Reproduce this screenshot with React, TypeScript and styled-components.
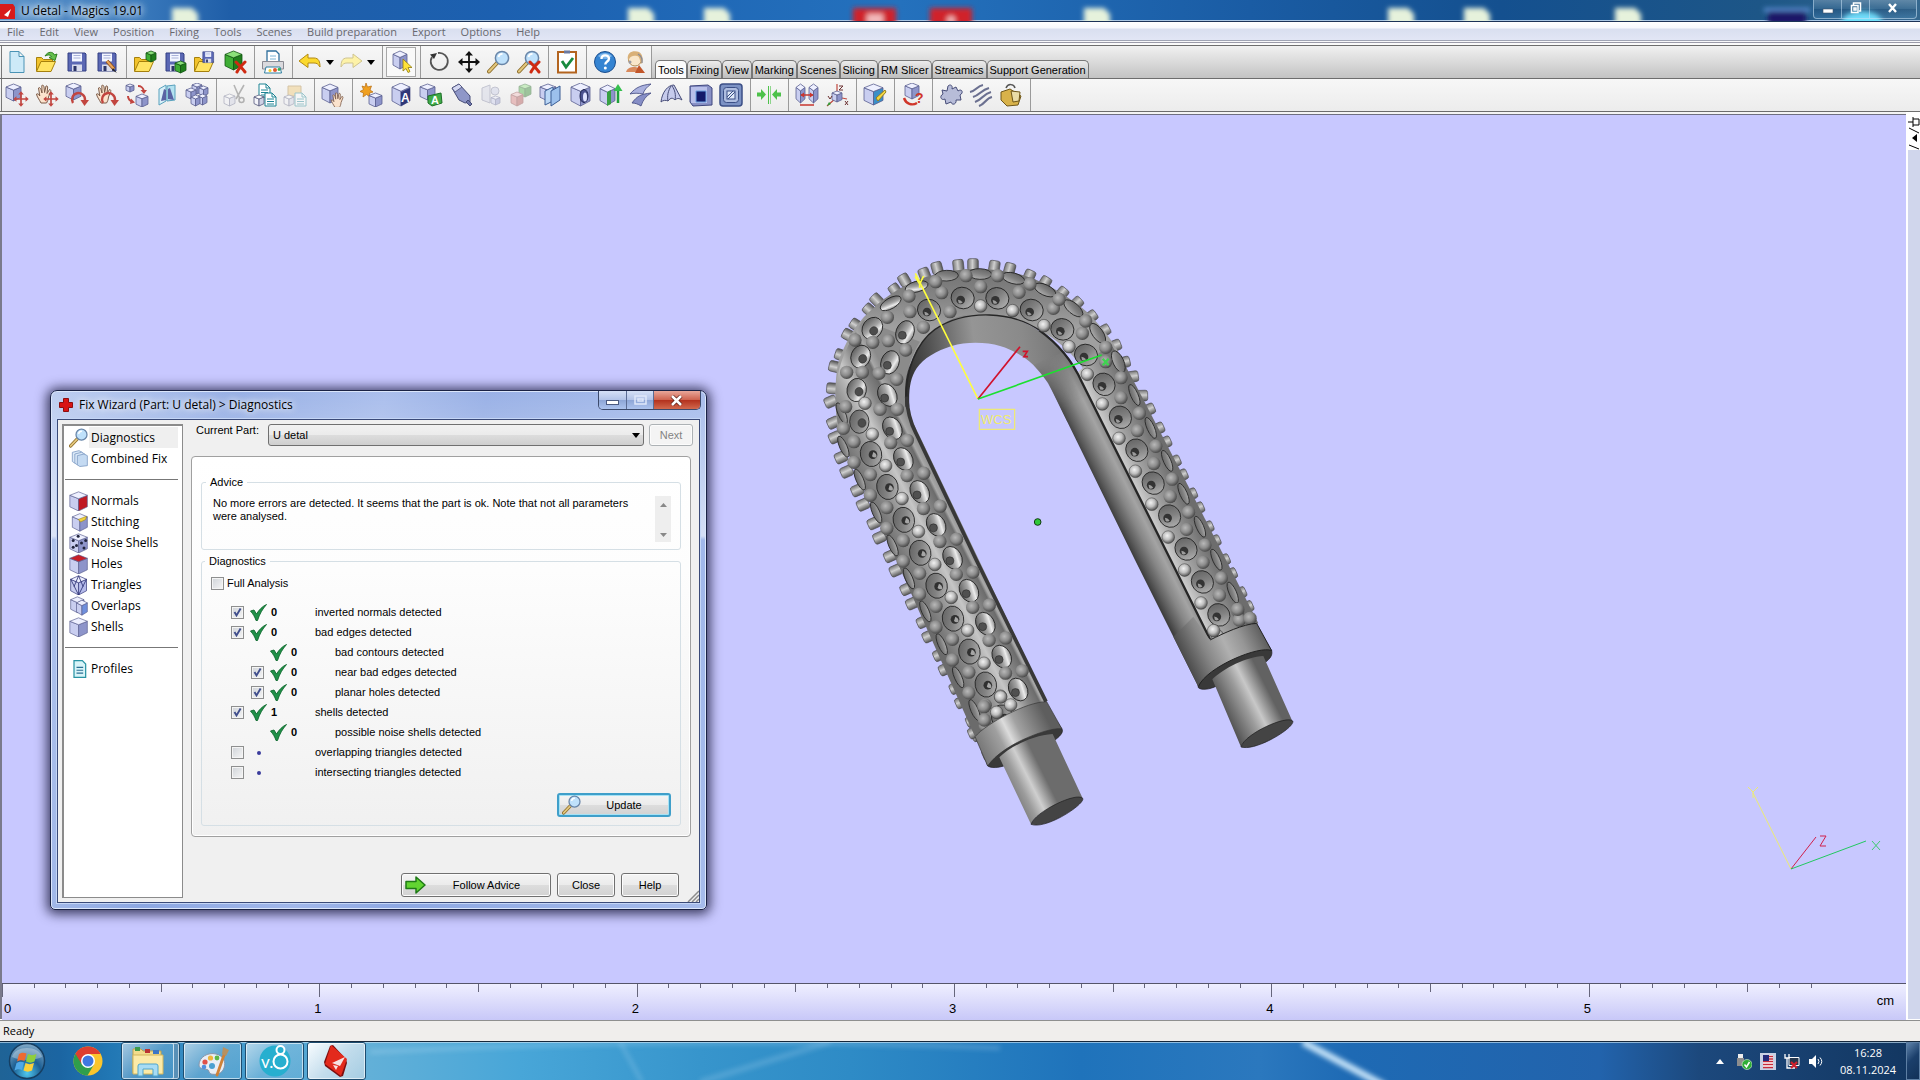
import React from 'react';
import styled, { createGlobalStyle } from 'styled-components';

const ui = '"Liberation Sans", Arial, sans-serif';
const segoe = '"Open Sans", "Noto Sans", sans-serif';

const Global = createGlobalStyle`
  *, *::before, *::after { box-sizing: border-box; }
  html, body, #root { height: 100%; margin: 0; }
  body { font: 11px/13px ${ui}; color: #000; overflow: hidden; }
  button, select, input { font: inherit; color: inherit; margin: 0; }
  button { cursor: default; }
`;

/* ---------- application shell ---------- */

const Shell = styled.div`
  display: flex;
  flex-direction: column;
  min-height: 100vh;
  background: #f0f0f0;
`;

const TitleBar = styled.header`
  position: relative;
  display: flex;
  justify-content: space-between;
  height: 22px;
  overflow: hidden;
  border-bottom: 1px solid #1c3358;
  box-shadow: inset 0 -1px 0 #a9c6e4;
  background: linear-gradient(90deg, #5c93c9 0, #3f7fc0 120px, #1f5ea8 230px, #1c60b0 500px, #2471bd 900px, #1a5ca4 1250px, #14508f 1500px, #1d5687 1760px, #35688f 100%);
`;

const Glimpses = styled.svg`
  position: absolute;
  inset: 0;
  width: 100%;
  height: 100%;
`;

const TitleLabel = styled.h1`
  position: relative;
  display: flex;
  align-items: center;
  gap: 6px;
  margin: 0;
  height: 21px;
  font: 400 12px/20px ${segoe};
  text-shadow: 0 0 6px #fff, 0 0 8px #fff, 0 0 10px #d8e8ff;
`;

const WindowButtons = styled.div`
  position: relative;
  display: flex;
  height: 19px;
  margin-right: 3px;
  border: 1px solid rgba(200, 225, 245, 0.6);
  border-top: 0;
  border-radius: 0 0 4px 4px;
  overflow: hidden;
`;

const WindowButton = styled.button<{ $w: number }>`
  display: grid;
  place-items: center;
  width: ${p => p.$w}px;
  padding: 0 0 2px;
  border: 0;
  border-right: 1px solid rgba(200, 225, 245, 0.55);
  background: linear-gradient(rgba(255, 255, 255, 0.22), rgba(255, 255, 255, 0.05) 50%, rgba(0, 20, 60, 0.1) 50%, rgba(120, 200, 255, 0.15));
  &:last-child { border-right: 0; }
`;

const MenuBar = styled.nav`
  display: flex;
  gap: 15px;
  height: 23px;
  padding: 1px 7px 0;
  background: linear-gradient(#fff 0, #f6f8fd 6px, #d9dff0 7px, #e2e6f5 18px, #a0a4b4 18px, #a0a4b4 19px, #f8f8fa 19px, #f8f8fa 20px, #9a9aa8 20px, #9a9aa8 21px, #fafafa 21px);
`;

const MenuItem = styled.button`
  height: 18px;
  padding: 0;
  border: 0;
  background: none;
  color: #68686e;
  font: 11px/18px ${segoe};
`;

const ToolRow = styled.div`
  display: flex;
  height: 33px;
  padding-left: 1px;
  border-top: 1px solid #6d6d6d;
  background: linear-gradient(#f7f7f7, #ececec);
`;

const ToolGroup = styled.div<{ $first?: boolean; $tight?: boolean }>`
  display: flex;
  align-items: center;
  padding: 0 ${p => (p.$tight ? 1 : 4)}px 0 ${p => (p.$first ? 0 : 3)}px;
  border-left: ${p => (p.$first ? '1px solid #777' : '0')};
  border-right: 1px solid #9a9a9a;
`;

const ToolButton = styled.button<{ $pressed?: boolean; $w?: number }>`
  display: grid;
  place-items: center;
  width: ${p => p.$w ?? 30}px;
  height: 30px;
  padding: 0;
  border: 1px solid ${p => (p.$pressed ? '#a8a8a8' : 'transparent')};
  background: ${p => (p.$pressed ? '#f9f9f9' : 'none')};
  &:disabled { opacity: 0.4; }
`;

const TabStrip = styled.div`
  display: flex;
  flex: 1;
  align-items: flex-end;
  padding-left: 3px;
  background: linear-gradient(#f1f1f1, #c3c3c3);
`;

const ToolTab = styled.button<{ $active?: boolean }>`
  height: 18px;
  padding: 0 2px;
  border: 1px solid #777;
  border-bottom: 0;
  border-radius: 5px 5px 0 0;
  background: ${p => (p.$active ? '#fbfbfb' : 'linear-gradient(#ececec, #bdbdbd)')};
  font: 11px/18px ${ui};
  white-space: nowrap;
`;

/* ---------- 3D viewport ---------- */

const Workspace = styled.div`
  display: flex;
  flex: 1;
  min-height: 0;
  border-top: 1px solid #6d6d6d;
  background: #f4f4f4;
`;

const Stage = styled.main`
  display: flex;
  flex: 1;
  flex-direction: column;
  margin-top: 2px;
  border-left: 2px solid #7a7a8c;
  border-top: 1px solid #6f6f80;
`;

const Scene = styled.div`
  position: relative;
  flex: 1;
  overflow: hidden;
  background: #c8c8ff;
`;

const PartDrawing = styled.svg`
  position: absolute;
  left: 798px;
  top: 125px;
  width: 520px;
  height: 600px;
`;

const AxisGizmo = styled.svg`
  position: absolute;
  right: 20px;
  bottom: 104px;
  width: 150px;
  height: 100px;
`;

const Ruler = styled.div`
  position: relative;
  display: grid;
  grid-template-columns: repeat(6, 1fr);
  height: 37px;
  border-top: 1px solid #55556a;
  background: linear-gradient(#efefff, #c8c8f8);
  font: 13px/16px ${ui};
`;

const Ticks = styled.div`
  display: grid;
  grid-template-columns: repeat(10, 1fr);
  height: 17px;
`;

const Tick = styled.i<{ $h: number }>`
  height: ${p => p.$h}px;
  border-left: 1px solid #66667c;
`;

const RulerNumber = styled.span<{ $first: boolean }>`
  display: block;
  margin-left: ${p => (p.$first ? 2 : -5)}px;
`;

const RulerUnit = styled.span`
  position: absolute;
  right: 12px;
  top: 9px;
`;

const SidePanel = styled.aside`
  width: 14px;
  border-left: 2px solid #fff;
  background: #d0d6ec;
`;

const PinTab = styled.button`
  display: block;
  width: 12px;
  height: 38px;
  padding: 0;
  border: 0;
  background: #fff;
`;

const StatusBar = styled.footer`
  height: 21px;
  padding: 0 3px;
  border-top: 1px solid #8f8f8f;
  box-shadow: 0 -1px 0 #fff;
  background: #f0eeec;
  font: 11px/20px ${segoe};
`;

/* ---------- dialog ---------- */

const Dialog = styled.section`
  position: absolute;
  left: 48px;
  top: 275px;
  width: 657px;
  padding: 0 6px 6px;
  border: 1px solid #1a2244;
  border-radius: 7px 7px 5px 5px;
  box-shadow: inset 0 0 0 1px #dbe6fb, 0 1px 12px 3px rgba(10, 10, 40, 0.75);
  background:
    linear-gradient(180deg, rgba(255, 255, 255, 0.1) 0, rgba(255, 255, 255, 0.55) 145px, transparent 149px),
    linear-gradient(100deg, #b7c9ef 0, #8ca7e2 180px, #a1b7ea 330px, #8ea8e3 430px, #a6bcec 100%);
`;

const DialogTitle = styled.div`
  display: flex;
  justify-content: space-between;
  height: 28px;
`;

const DialogHeading = styled.h2`
  display: flex;
  align-items: center;
  gap: 6px;
  margin: 0;
  padding-left: 2px;
  font: 400 12px/28px ${segoe};
  text-shadow: 0 0 6px #fff, 0 0 10px #fff;
`;

const DialogControls = styled.div`
  display: flex;
  height: 19px;
  margin-right: -1px;
  border: 1px solid #3c4a6c;
  border-top: 0;
  border-radius: 0 0 5px 5px;
  overflow: hidden;
`;

const DialogControl = styled.button<{ $w: number; $danger?: boolean }>`
  display: grid;
  place-items: center;
  width: ${p => p.$w}px;
  padding: 0;
  border: 0;
  border-right: 1px solid ${p => (p.$danger ? 'transparent' : '#5b6c94')};
  background: ${p =>
    p.$danger
      ? 'linear-gradient(#e9a79a, #cf6450 48%, #b2301c 50%, #d2694e)'
      : 'linear-gradient(#d5e0f6, #b3c4e8 48%, #8da5d6 50%, #acc3ee)'};
`;

const DialogBody = styled.div`
  position: relative;
  display: grid;
  grid-template-columns: 121px 1fr;
  column-gap: 8px;
  padding: 4px 6px 4px 4px;
  border: 1px solid #3a4a78;
  box-shadow: 0 0 0 1px #c5d6f6;
  background: #f0f0f0;
`;

const PageList = styled.nav`
  padding: 1px 4px 0 1px;
  border: 2px solid #8b8b8b;
  border-right-width: 1px;
  border-bottom-width: 1px;
  background: #fff;
`;

const PageRow = styled.button`
  display: flex;
  align-items: center;
  width: 100%;
  height: 21px;
  padding: 0 0 0 4px;
  border: 0;
  background: none;
  font: 12px/21px ${segoe};
  text-align: left;
`;

const PageName = styled.span<{ $selected?: boolean }>`
  flex: 1;
  padding-left: 2px;
  background: ${p => (p.$selected ? '#efefef' : 'none')};
  white-space: nowrap;
`;

const PageRule = styled.hr`
  height: 1px;
  margin: 10px 0;
  border: 0;
  background: #777;
`;

const PageColumn = styled.div`
  display: flex;
  flex-direction: column;
`;

const PartRow = styled.div`
  display: flex;
  height: 22px;
  gap: 5px;
  padding-left: 5px;
`;

const PartLabel = styled.label`
  width: 67px;
  line-height: 13px;
`;

const PartPicker = styled.div`
  position: relative;
  flex: 1;
`;

const PartSelect = styled.select`
  appearance: none;
  width: 100%;
  height: 22px;
  padding: 0 4px;
  border: 1px solid #707070;
  border-radius: 3px;
  background: linear-gradient(#f2f2f2, #ebebeb 50%, #dddddd 50%, #cfcfcf);
`;

const PickerArrow = styled.svg`
  position: absolute;
  right: 4px;
  top: 9px;
  pointer-events: none;
`;

const PushButton = styled.button<{ $w: number; $focus?: boolean }>`
  display: flex;
  align-items: center;
  justify-content: center;
  width: ${p => p.$w}px;
  height: 24px;
  padding: 0 3px;
  border: ${p => (p.$focus ? '2px solid #3f9fca' : '1px solid #707070')};
  border-radius: 3px;
  box-shadow: inset 0 0 0 1px ${p => (p.$focus ? '#a5e2f5' : '#fcfcfc')};
  background: linear-gradient(#f4f4f4, #ebebeb 50%, #dddddd 50%, #d2d2d2);
  &:disabled { border-color: #adb2b5; background: #f4f4f4; color: #838383; height: 22px; }
`;

const ButtonText = styled.span`
  flex: 1;
  text-align: center;
`;

const TabPage = styled.div`
  margin: 10px 2px 0 0;
  padding: 18px 9px 10px;
  border: 1px solid #a0a0a0;
  border-radius: 4px;
  background: linear-gradient(#fff, #fdfdfd 30%, #f0f0f0);
  box-shadow: inset 0 0 0 1px #fff;
`;

const Group = styled.fieldset`
  margin: 0 0 4px;
  padding: 7px 9px 7px 10px;
  border: 1px solid #d5dfe5;
  border-radius: 3px;
  &:last-child { margin: 0; padding: 8px 9px 8px 9px; }
`;

const Legend = styled.legend`
  margin-left: -6px;
  padding: 0 4px;
  line-height: 14px;
`;

const AdviceBox = styled.div`
  display: flex;
  justify-content: space-between;
  height: 46px;
`;

const AdviceText = styled.p`
  margin: 0;
  padding: 1px 0 0 1px;
  width: 430px;
`;

const ScrollGutter = styled.div`
  display: flex;
  flex-direction: column;
  justify-content: space-between;
  align-items: center;
  width: 16px;
  padding: 7px 0 5px;
  background: #eeeeee;
`;

const Box = styled.input`
  appearance: none;
  flex: none;
  width: 13px;
  height: 13px;
  border: 1px solid #8e8f8f;
  box-shadow: inset 0 0 0 1px #f4f4f4;
  background: linear-gradient(135deg, #cfd3d8, #f6f6f6);
  &:checked {
    background: url("data:image/svg+xml,%3Csvg xmlns='http://www.w3.org/2000/svg' viewBox='0 0 11 11'%3E%3Cpath d='M2.5 5l2 3.4L8.6 1.6' fill='none' stroke='%23404e8c' stroke-width='1.9'/%3E%3C/svg%3E") center / 11px 11px no-repeat, linear-gradient(135deg, #cfd3d8, #f6f6f6);
  }
`;

const FullRow = styled.label`
  display: flex;
  align-items: center;
  gap: 3px;
  height: 14px;
  margin-bottom: 12px;
`;

const CheckList = styled.ul`
  margin: 0 0 11px;
  padding: 0;
  list-style: none;
`;

const CheckRow = styled.li<{ $level: number }>`
  display: flex;
  align-items: center;
  height: 20px;
  padding-left: ${p => p.$level * 20}px;
`;

const BoxSlot = styled.span`
  display: flex;
  width: 19px;
`;

const MarkSlot = styled.span`
  display: flex;
  width: 21px;
`;

const Count = styled.b`
  width: 44px;
`;

const UpdateLine = styled.div`
  display: flex;
  justify-content: flex-end;
`;

const DialogFooter = styled.div`
  display: flex;
  justify-content: flex-end;
  gap: 6px;
  height: 25px;
  margin-top: 36px;
  padding-right: 14px;
`;

const Grip = styled.svg`
  position: absolute;
  right: 0;
  bottom: 0;
`;

/* ---------- taskbar ---------- */

const Taskbar = styled.footer`
  position: relative;
  display: flex;
  align-items: center;
  height: 39px;
  border-top: 1px solid #16283c;
  box-shadow: inset 0 1px 0 rgba(190, 220, 240, 0.7);
  overflow: hidden;
  background: linear-gradient(90deg, #1f6396 0, #1b65a2 60px, #2177b4 110px, #4aa0d0 260px, #62b0d8 370px, #48a6d8 520px, #3795cc 700px, #2e8bc6 850px, #1f73bb 1080px, #2b78be 1260px, #1e6ab4 1350px, #2263ac 1600px, #1c487c 1700px, #123660 100%);
`;

const TaskGlow = styled.svg`
  position: absolute;
  inset: 0;
  width: 100%;
  height: 100%;
`;

const Pinned = styled.button<{ $w: number }>`
  position: relative;
  display: grid;
  place-items: center;
  width: ${p => p.$w}px;
  height: 38px;
  padding: 0;
  border: 0;
  background: none;
`;

const Running = styled.button<{ $active?: boolean; $stacked?: boolean }>`
  position: relative;
  display: grid;
  place-items: center;
  width: 59px;
  height: 38px;
  margin-right: 3px;
  padding: 0 ${p => (p.$stacked ? 5 : 0)}px 0 0;
  border: 1px solid #1d4d70;
  border-radius: 3px;
  box-shadow: inset 0 0 0 1px rgba(255, 255, 255, 0.6)${p => (p.$stacked ? ', inset -5px 0 0 0 rgba(40, 110, 160, 0.7), inset -6px 0 0 0 rgba(255, 255, 255, 0.7)' : '')};
  background: ${p =>
    p.$active
      ? 'linear-gradient(135deg, #f8fcff, #c3ddec 50%, #a4cce2)'
      : 'linear-gradient(135deg, rgba(255,255,255,.6), rgba(255,255,255,.18) 50%, rgba(255,255,255,.08))'};
`;

const Tray = styled.div`
  position: relative;
  display: flex;
  align-items: center;
  gap: 8px;
  height: 38px;
  margin-left: auto;
`;

const TrayButton = styled.button`
  display: grid;
  place-items: center;
  width: 16px;
  height: 20px;
  padding: 0;
  border: 0;
  background: none;
`;

const Clock = styled.time`
  width: 72px;
  margin-right: -6px;
  color: #fff;
  font: 11px/17px ${segoe};
  text-align: center;
`;

const ShowDesktop = styled.button`
  width: 14px;
  height: 38px;
  padding: 0;
  border: 1px solid #5d7fa4;
  background: linear-gradient(135deg, #5f83ab, #1b3f6b 45%, #123158);
`;

/* ---------- icons ---------- */

type Tone = { top: string; left: string; right: string; line: string };
const violet: Tone = { top: '#eef0ff', left: '#c9cef0', right: '#8d94ca', line: '#5a5f90' };
const green: Tone = { top: '#8be07a', left: '#3fae35', right: '#1f7f1c', line: '#115511' };
const redTone: Tone = { top: '#f1b9b9', left: '#d97777', right: '#b04848', line: '#803030' };
const plain: Tone = { top: '#fff', left: '#f4f4fa', right: '#cfd2e4', line: '#55597c' };

const Cube = ({ x, y, w, h, t = violet, right }: { x: number; y: number; w: number; h: number; t?: Tone; right?: string }) => (
  <g stroke={t.line} strokeWidth="0.8" strokeLinejoin="round">
    <path fill={t.left} d={`M${x} ${y + h * 0.18}L${x + w / 2} ${y + h * 0.36}V${y + h}L${x} ${y + h * 0.78}Z`} />
    <path fill={right ?? t.right} d={`M${x + w} ${y + h * 0.18}L${x + w / 2} ${y + h * 0.36}V${y + h}L${x + w} ${y + h * 0.78}Z`} />
    <path fill={t.top} d={`M${x} ${y + h * 0.18}L${x + w / 2} ${y}L${x + w} ${y + h * 0.18}L${x + w / 2} ${y + h * 0.36}Z`} />
  </g>
);

const Folder = () => (
  <g stroke="#a5800c" strokeLinejoin="round">
    <path fill="#f2c32c" d="M1.5 21V7.5h5l2 2h9V12" />
    <path fill="#ffe463" d="M1.5 21.5L6 11.5h14.5L16 21.5Z" />
  </g>
);

const Floppy = () => (
  <g>
    <path d="M3 3h17l1 1v17H3Z" fill="#5b68b4" stroke="#333f82" />
    <path d="M7 3.500h10v8H7Z" fill="#f3f6ff" />
    <path d="M8.500 5.500h7M8.500 8h7" stroke="#a9b1d8" />
    <path d="M7 14.500h10V21H7Z" fill="#d9dcec" />
    <path d="M8.500 16h3v5h-3Z" fill="#2c3568" />
  </g>
);

const Glass = () => (
  <g>
    <path d="M2 21.500L10 13" stroke="#8b6a26" strokeWidth="4" strokeLinecap="round" />
    <path d="M2 21.500L10 13" stroke="#e2c67c" strokeWidth="2.200" strokeLinecap="round" />
    <circle cx="15" cy="8" r="6.600" fill="#bfe1fb" stroke="#6885a8" strokeWidth="1.500" />
    <path d="M11.500 7a4 4 0 0 1 4-3.200" stroke="#fff" strokeWidth="1.800" fill="none" />
  </g>
);

const RedX = () => <path d="M13 12c2 2 6 6 9 10M22 12c-3 3-6 6-8 10" stroke="#cf2a12" strokeWidth="3" fill="none" strokeLinecap="round" />;

const Cross4 = ({ x, y, s, c, w = 1.8 }: { x: number; y: number; s: number; c: string; w?: number }) => (
  <g stroke={c} strokeWidth={w} fill={c} transform={`translate(${x} ${y}) scale(${s})`}>
    <path d="M-8 0H8M0-8V8" />
    <path stroke="none" d="M0-11l4 4.500h-8ZM0 11l4-4.500h-8ZM-11 0l4.500-4v8ZM11 0L6.500-4v8Z" />
  </g>
);

const Turn = () => (
  <g>
    <path d="M8 20a6.500 6.500 0 1 1 12-3" fill="none" stroke="#c2453f" strokeWidth="2.400" />
    <path d="M15.500 17h8.500l-4.500 6Z" fill="#c2453f" />
  </g>
);

const Hand = () => (
  <path d="M6 20c-2-4-4-6-4.500-9 1.200-.8 2.300.4 3.300 2L3.500 5c1.200-1 2 .2 2.500 1.500L7 10 6.800 2.500c1.300-.8 2 .2 2.200 1.500l.6 5.500L11 3c1.300-.5 1.800.6 1.600 2L12 10.500l2.500-4c1.200 0 1.500 1 1.200 2L13.500 14c-.3 3-1 4.500-2 6Z" fill="#fbe3cd" stroke="#7c5b48" strokeWidth="1" />
);

const Sheet = ({ x, y }: { x: number; y: number }) => (
  <g transform={`translate(${x} ${y})`}>
    <path d="M0 0h7l4 4v9H0Z" fill="#fff" stroke="#1d8494" />
    <path d="M7 0v4h4M2 6h7M2 8.500h7M2 11h7" stroke="#1d8494" fill="none" />
  </g>
);

const Icons: Record<string, React.ReactNode> = {
  new: <path d="M5 1.500h9l5 5v16H5Z M14 1.500v5h5" fill="#cdeaf8" stroke="#4a93b5" />,
  open: <><Folder /><path d="M10 6c3-5 8-4.500 9.500-1l2.500-1-2 6.500-6-3 2.500-1c-1-2-4-2-6.500-.5Z" fill="#66c04c" stroke="#2d7d20" /></>,
  save: <Floppy />,
  saveAs: <><Floppy /><path d="M12 11l7 8" stroke="#8a4a17" strokeWidth="3.500" /><path d="M12 11l7 8" stroke="#e8a458" strokeWidth="2" /><path d="M18 18l4 5-5-3Z" fill="#222" /></>,
  addPart: <><Folder /><Cube x={13} y={1} w={10} h={11} t={green} /></>,
  savePart: <><Floppy /><Cube x={12} y={11} w={11} h={12} t={green} /></>,
  saveProject: <><Folder /><g transform="translate(8 0) scale(.6)"><Floppy /></g></>,
  removePart: <><Cube x={2} y={1} w={17} h={19} t={green} /><RedX /></>,
  print: <>
    <path d="M6 1h9l3 3v9H6Z" fill="#fff" stroke="#2f6f9c" strokeWidth="1.300" /><path d="M9 6h6M9 9h6" stroke="#7db4d6" />
    <path d="M1.500 11.500h21V19h-21Z" fill="#dadade" stroke="#8a8a92" />
    <path d="M5 17h14l1.500 6h-17Z" fill="#fff" stroke="#2f7fa0" /><circle cx="14" cy="20" r="2" fill="#e4572e" /><circle cx="18" cy="19.500" r="1.400" fill="#37b34a" /><circle cx="9" cy="20.500" r="1.500" fill="#f3d02e" />
  </>,
  undo: <path d="M1 11l9-7v4h6c5 0 6 4 6 9-2-3-3-4-6-4h-6v4.500Z" fill="#fbd92e" stroke="#b48a12" />,
  redo: <path d="M23 11l-9-7v4H8c-5 0-6 4-6 9 2-3 3-4 6-4h6v4.500Z" fill="#fdf2a8" stroke="#cfc490" />,
  pick: <><Cube x={4} y={1} w={14} h={18} /><path d="M14 9v12l3-2.500 2 4 2-1-2-4h4Z" fill="#ffe23a" stroke="#8f7b12" strokeWidth=".8" /></>,
  rotate: <><path d="M5 7a8.500 8.500 0 1 0 6-4" fill="none" stroke="#555" strokeWidth="1.800" /><path d="M3 4.500l7-1.500-3 6Z" fill="#333" /></>,
  move: <Cross4 x={12} y={12} s={1} c="#111" />,
  zoom: <Glass />,
  zoomOff: <><Glass /><RedX /></>,
  checklist: <><path d="M3 2h18v20.500H3Z" fill="#fff" stroke="#b3641f" strokeWidth="2" /><path d="M9 .5h6v3H9Z" fill="#6b7aa0" /><path d="M7 11l4 6 7-9" fill="none" stroke="#188a3e" strokeWidth="2.800" /></>,
  help: <><circle cx="12" cy="12" r="10.500" fill="#3584d2" stroke="#1c4f8f" /><path d="M5 6c4-4 10-4 14 0-4 4-9 4-14 0Z" fill="#9ecbf2" opacity=".7" /><path d="M8.500 9c0-5 7.500-4.500 7.500-.5 0 3-3.700 3-3.700 6" fill="none" stroke="#fff" strokeWidth="2.400" /><circle cx="12.300" cy="18" r="1.500" fill="#fff" /></>,
  support: <><path d="M3 22c1-4 5-5 8-5s6 1 7 5Z" fill="#d98a5c" /><path d="M16 15l6 8H12Z" fill="#c2562a" /><circle cx="12" cy="9.500" r="6.500" fill="#f9e6c9" stroke="#b08a52" /><path d="M5 10C3 1 12 0 16 2c4 2 4 8 3 12-2-1-2-8-5-8-3-1-7 0-9 4Z" fill="#d9b077" /><circle cx="7" cy="12" r="1.500" fill="#9a9aa4" /><path d="M15 4q5 3 4 9" stroke="#8b8b95" strokeWidth="1.300" /></>,
  partMove: <><Cube x={1} y={1} w={15} h={17} /><Cross4 x={16} y={16} s={0.7} c="#c2453f" w={2.4} /></>,
  handMove: <><Hand /><Cross4 x={16} y={16} s={0.7} c="#c2453f" w={2.4} /></>,
  partTurn: <><Cube x={1} y={0} w={15} h={17} /><Turn /></>,
  handTurn: <><Hand /><Turn /></>,
  scale: <><Cube x={1} y={1} w={8} h={8} /><Cube x={11} y={11} w={12} h={13} /><path d="M13 3c4 0 5 2 6 5M3 13c0 3 2 5 5 6" stroke="#c2453f" strokeWidth="2" fill="none" /><path d="M15.500 7h6.500l-3 4ZM6 15.500l4 4-5 1.500Z" fill="#c2453f" /></>,
  mirror: <><path d="M4 22V6l7-4v16Z" fill="#d8f0f8" stroke="#58a1bd" /><path d="M12 18V3l8-1v15Z" fill="#b4e2f0" stroke="#58a1bd" /><path d="M6 18L9 6l2 1v10ZM13 16V6l2-1 4 12Z" fill="#5a64a4" /></>,
  duplicate: <><Cube x={7} y={0} w={10} h={11} /><Cube x={14} y={3} w={9} h={10} /><Cube x={1} y={5} w={10} h={11} /><Cube x={13} y={11} w={9} h={11} /><Cube x={6} y={12} w={9} h={11} /></>,
  cut: <><Cube x={1} y={11} w={11} h={12} t={plain} /><path d="M11 2l6 14M21 2l-8 14" stroke="#555" strokeWidth="1.600" /><circle cx="18.500" cy="17" r="2.500" fill="none" stroke="#555" strokeWidth="1.500" /></>,
  copy: <><Sheet x={6} y={1} /><Cube x={1} y={12} w={10} h={11} t={plain} /><Sheet x={12} y={10} /></>,
  paste: <><path d="M5 3h13v10H5Z" fill="#f0c46a" stroke="#a47c32" /><Cube x={1} y={12} w={10} h={11} t={plain} /><Sheet x={12} y={10} /></>,
  grab: <><Cube x={1} y={1} w={16} h={19} /><g transform="translate(9 8) scale(.82)"><Hand /></g></>,
  create: <><path d="M7 0l1.500 4 4-1-1.500 4 3 2-3.500 1 .5 4-3.500-2.500L4 14l.5-4L1 8.500l3.500-2L3 3l3 1Z" fill="#f0a020" stroke="#b86d10" strokeWidth=".7" /><Cube x={10} y={10} w={13} h={14} /></>,
  label: <><Cube x={3} y={0} w={18} h={23} /><path d="M12 9l9-4v13l-9 5Z" fill="#2e3878" /><text x="12" y="19" fontSize="12" fontWeight="700" fontFamily="Liberation Sans" fill="#fff">A</text></>,
  labelPlate: <><Cube x={1} y={1} w={15} h={16} /><path d="M9 13l13-3 1 10-10 3-4-3Z" fill="#3faa48" stroke="#1c6e26" /><text x="12" y="21" fontSize="11" fontWeight="700" fontFamily="Liberation Sans" fill="#fff">A</text></>,
  pen: <><path d="M3 5l7-4 11 12v6l-5 1-6-3Z" fill="#8f97c8" stroke="#474d78" /><path d="M3 5l7-4 3 3-7 5Z" fill="#d4d8f2" stroke="#474d78" strokeWidth=".8" /><path d="M19 17l4 4-2 2-4-4Z" fill="#6d74a8" stroke="#474d78" /></>,
  cutMirror: <><path d="M3 5l8-3v18l-8-3ZM3 5" fill="#cfd2e4" stroke="#7b7f9c" /><circle cx="16" cy="8" r="4" fill="#c6cae6" stroke="#7b7f9c" /><Cube x={12} y={13} w={9} h={9} /></>,
  boolean: <><Cube x={10} y={1} w={12} h={13} t={green} /><Cube x={2} y={9} w={12} h={14} t={redTone} /></>,
  shellOut: <><Cube x={1} y={1} w={16} h={17} /><path d="M6 8l8-4v14l-8 4Z" fill="#bcd8f6" stroke="#3a5d94" /><path d="M12 8l9-5v14l-9 6Z" fill="#9cc0ec" stroke="#3a5d94" /></>,
  hollow: <><Cube x={2} y={0} w={19} h={23} /><ellipse cx="15" cy="13" rx="4" ry="6.500" fill="#4b5290" stroke="#1e2450" /><ellipse cx="16" cy="14" rx="2" ry="4.500" fill="#dfe3ff" /></>,
  extrude: <><Cube x={1} y={2} w={15} h={20} /><path d="M8 9l4-2v14l-4 2Z" fill="#38a043" /><path d="M19 20V6" stroke="#1fa03a" strokeWidth="2.500" /><path d="M14.500 8L19 1l4.500 7Z" fill="#36c04f" /></>,
  surface: <><path d="M1 11C7 4 13 2 22 1c-4 3-7 6-8 10-5-1-9-1-13 0Z" fill="#aab1de" stroke="#3f467e" strokeWidth=".8" /><path d="M3 20c5-7 9-9 19-10-5 3-8 7-10 13-3-2-6-3-9-3Z" fill="#868ec6" stroke="#3f467e" strokeWidth=".8" /></>,
  offset: <><path d="M2 19C3 9 9 2 15 2l8 15c-3-2-5-2-7 0-2-2-4-3-7 1-2-1-5-1-7 1Z" fill="#c6cbec" stroke="#474d78" /><path d="M12 3c-3 5-4 10-3 15M13 3c3 4 4 9 3 14" stroke="#474d78" /></>,
  box: <><path d="M1 3l18-1 4 3v17l-19 1-3-4Z" fill="#8991c6" stroke="#3f467e" /><path d="M2 4h16v16H2Z" fill="#b9c0ea" /><path d="M7 8h10v11H7Z" fill="#141a6a" stroke="#6aa0e0" /></>,
  nest: <><rect x="1" y="1" width="22" height="22" rx="3" fill="#7c92c4" stroke="#3b4f86" strokeWidth="1.500" /><rect x="4.500" y="4.500" width="15" height="15" rx="3" fill="#aebde0" stroke="#3b4f86" /><rect x="8" y="8" width="8" height="8" fill="#dfe8f8" stroke="#3b4f86" /><path d="M8 14l6-6M9 16l7-7" stroke="#3b4f86" /></>,
  squeeze: <path d="M0 9.500h4V6l5 5.500L4 17v-3.500H0ZM24 9.500h-4V6l-5 5.500 5 5.500v-3.500h4Z M11 3h1v18h-1ZM13 3h.6v18H13Z" fill="#4dc24a" />,
  measure: <><Cube x={1} y={1} w={9} h={19} /><Cube x={14} y={1} w={9} h={19} /><path d="M6 12h12M5 22h14" stroke="#c8372f" strokeWidth="1.600" /><path d="M9 9.500L5.500 12 9 14.500ZM15 9.500l3.500 2.500-3.500 2.500Z" fill="#c8372f" /></>,
  axes: <><path d="M12 12V1M12 14l10 2M11 15L2 23" stroke="#c0483f" strokeWidth="1.200" /><Cube x={7} y={8} w={10} h={11} /><path d="M2 23l2-4 2 2Z" fill="#2c9a33" /><path d="M14 3h4l-4 4h4M20 18l3 4M23 18l-3 4M3 13l2 3 2-3" stroke="#6b3030" strokeWidth="1" /></>,
  slice: <><Cube x={1} y={1} w={19} h={21} right="#3a8fc8" /><path d="M13 15l9-8 1 2-8 9Z" fill="#f4d742" stroke="#94801d" /></>,
  query: <><Cube x={4} y={0} w={14} h={16} /><path d="M3 15c2 6 8 8 13 5" stroke="#d0362a" strokeWidth="2.400" fill="none" /><text x="14" y="20" fontSize="14" fontWeight="700" fontFamily="Liberation Sans" fill="#d0362a">?</text></>,
  settings: <path d="M9 3c2-2 5-1 4 3l4-2 2 4c4-3 6 2 2 4l1 5-5 0c1 4-4 6-5 2l-5 2-1-5c-4 2-6-3-2-5l-1-4 5 1Z" fill="#b7bcd8" stroke="#474d78" />,
  fibres: <path d="M1 9c6-1 7-6 13-7M4 14C11 12 12 7 20 5M6 19c7-2 8-8 16-10M10 23c6-2 7-8 13-9" fill="none" stroke="#6b7090" strokeWidth="2.200" />,
  clothes: <><path d="M2 9l9-3 11 7-3 9-11 1-6-6Z" fill="#d8b24a" stroke="#6f571a" /><path d="M7 5c2-5 8-4 9 0" stroke="#555" fill="none" strokeWidth="1.500" /><path d="M12 8l9 1-1 9-6 1Z" fill="#eadca6" stroke="#6f571a" /></>,
};

const Icon = ({ name, size = 24 }: { name: string; size?: number }) => (
  <svg width={size} height={size} viewBox="0 0 24 24" fill="none" aria-hidden="true">{Icons[name]}</svg>
);

const DropArrow = () => <svg width="8" height="5" viewBox="0 0 8 5"><path d="M0 0h8L4 5Z" fill="#000" /></svg>;

type Tool = [string, string, boolean?];

const Tools = ({ items }: { items: Tool[] }) => (
  <>{items.map(([name, label, off]) => (
    <ToolButton key={name} aria-label={label} disabled={off}><Icon name={name} /></ToolButton>
  ))}</>
);

const editGroups: Tool[][] = [
  [['partMove', 'Translate'], ['handMove', 'Interactive translate'], ['partTurn', 'Rotate'], ['handTurn', 'Interactive rotate'], ['scale', 'Rescale'], ['mirror', 'Mirror'], ['duplicate', 'Duplicate']],
  [['cut', 'Cut', true], ['copy', 'Copy'], ['paste', 'Paste', true]],
  [['grab', 'Pick and place']],
  [['create', 'Create'], ['label', 'Label'], ['labelPlate', 'Label plate'], ['pen', 'Texture'], ['cutMirror', 'Cut or punch', true], ['boolean', 'Boolean', true], ['shellOut', 'Shells'], ['hollow', 'Hollow'], ['extrude', 'Extrude'], ['surface', 'Surface'], ['offset', 'Offset'], ['box', 'Box'], ['nest', 'Nest']],
  [['squeeze', 'Shrink']],
  [['measure', 'Measure'], ['axes', 'Coordinate system']],
  [['slice', 'Slice']],
  [['query', 'Part info']],
  [['settings', 'Settings'], ['fibres', 'Structures'], ['clothes', 'Material']],
];

const menus = ['File', 'Edit', 'View', 'Position', 'Fixing', 'Tools', 'Scenes', 'Build preparation', 'Export', 'Options', 'Help'];
const tabs = ['Tools', 'Fixing', 'View', 'Marking', 'Scenes', 'Slicing', 'RM Slicer', 'Streamics', 'Support Generation'];

/* ---------- the part ---------- */

type P = [number, number];
const STEP: P = [49.2, 98.8];
const run = (x: number, y: number, n: number): P[] =>
  Array.from({ length: n }, (_, i) => [x + STEP[0] * i, y + STEP[1] * i] as P);

const pins: P[] = [
  ...run(123, 652, 10), ...run(140, 695, 9), [92, 485], [100, 548], [105, 592], [523, 1477],
  [98, 445], [105, 380], [123, 345], [145, 285], [168, 255], [208, 210], [230, 180], [285, 150], [313, 120], [373, 102],
  [411, 84], [475, 77], [519, 74], [583, 80], [629, 87], [688, 108], [735, 128], [786, 160], [830, 190], [873, 230],
  [912, 272], [945, 317], [972, 367], ...run(997, 410, 8), ...run(1025, 467, 7),
];

const edgeCups: P[] = [...run(130, 620, 9), [125, 520], ...run(1003, 465, 7)];

const outerCups: [number, number, number][] = [
  [178, 545, 0], [170, 450, 10], [182, 350, 20], [217, 265, 35], [272, 190, 60], [350, 140, 75],
  [440, 107, 88], [540, 102, 92], [640, 115, 105], [735, 150, 115], [820, 205, 130], [893, 280, 145], [955, 365, 155],
];

const innerCups: P[] = [
  [387, 210], [488, 174], [592, 175], [695, 210], [787, 268], [858, 345], ...run(912, 433, 9),
];
const leftInner: P[] = [[315, 277], [270, 367], [262, 465], [277, 565], ...run(310, 657, 9)];
const leftMain: P[] = run(213, 642, 9);

const brightBalls: P[] = [
  [195, 490], [217, 583], ...run(257, 677, 8), [602, 1371], [632, 1395], [590, 1417], [542, 198], [638, 212], [732, 257], [807, 320], [862, 403],
  [907, 492], ...run(957, 595, 7), [1241, 1172],
];
const greyBalls: P[] = [
  [240, 508], ...run(272, 608, 8), [292, 508], ...run(322, 601, 8), [137, 500], ...run(162, 605, 9), [130, 565], ...run(162, 667, 9),
  [265, 302], [262, 232], [330, 215], [327, 168], [425, 158], [407, 125], [450, 215], [498, 107], [542, 140], [593, 107],
  [657, 157], [690, 132], [760, 205], [777, 178], [847, 280], [857, 243], [917, 365], [917, 322], [963, 413],
  ...run(963, 473, 7), ...run(1018, 520, 7), [370, 262], [317, 330], [290, 418], [218, 307], [165, 300], [187, 397], [237, 400], [140, 397],
  [1318, 1140], [1350, 1135], [1313, 1108], [552, 1400], [553, 1440],
];

const Pin = ({ p: [x, y] }: { p: P }) => {
  let a = -24;
  if (y <= 480) a = (Math.atan2(y - 480, x - 520) * 180) / Math.PI;
  return (
    <g transform={`translate(${x} ${y}) rotate(${a})`}>
      <rect x="-18" y="-16" width="36" height="32" rx="7" fill="url(#pin)" stroke="#4c4c4c" strokeWidth="2" />
    </g>
  );
};

const UPart = () => (
  <PartDrawing viewBox="0 0 1560 1800" role="img" aria-label="U detal">
    <defs>
      <linearGradient id="pin" x1="0" y1="0" x2="0" y2="1"><stop offset="0" stopColor="#777" /><stop offset=".45" stopColor="#cfcfcf" /><stop offset="1" stopColor="#565656" /></linearGradient>
      <radialGradient id="bright" cx=".42" cy=".38" r=".65"><stop offset="0" stopColor="#f2f2f2" /><stop offset=".5" stopColor="#bebebe" /><stop offset="1" stopColor="#484848" /></radialGradient>
      <radialGradient id="grey" cx=".4" cy=".38" r=".65"><stop offset="0" stopColor="#b8b8b8" /><stop offset=".55" stopColor="#8b8b8b" /><stop offset="1" stopColor="#444" /></radialGradient>
      <linearGradient id="cupDark" x1="0" y1="0" x2="1" y2=".4"><stop offset="0" stopColor="#5e5e5e" /><stop offset=".6" stopColor="#828282" /><stop offset="1" stopColor="#a6a6a6" /></linearGradient>
      <linearGradient id="cupLight" x1="0" y1=".3" x2="1" y2=".6"><stop offset="0" stopColor="#5c5c5c" /><stop offset=".5" stopColor="#a5a5a5" /><stop offset=".75" stopColor="#ececec" /><stop offset="1" stopColor="#8a8a8a" /></linearGradient>
      <linearGradient id="leftArm" gradientUnits="userSpaceOnUse" x1="280" y1="940" x2="479" y2="840"><stop offset="0" stopColor="#6b6b6b" /><stop offset=".3" stopColor="#959595" /><stop offset=".52" stopColor="#c6c6c6" /><stop offset=".72" stopColor="#858585" /><stop offset=".86" stopColor="#6c6c6c" /><stop offset=".9" stopColor="#a8a8a8" /><stop offset="1" stopColor="#8b8b8b" /></linearGradient>
      <linearGradient id="rightArm" gradientUnits="userSpaceOnUse" x1="1110" y1="960" x2="1220" y2="905"><stop offset="0" stopColor="#d0d0d0" /><stop offset=".4" stopColor="#a0a0a0" /><stop offset="1" stopColor="#6d6d6d" /></linearGradient>
      <linearGradient id="tube" gradientUnits="userSpaceOnUse" x1="1005" y1="960" x2="1092" y2="916"><stop offset="0" stopColor="#3c3c3c" /><stop offset=".2" stopColor="#5c5c5c" /><stop offset=".5" stopColor="#868686" /><stop offset=".8" stopColor="#a4a4a4" /><stop offset="1" stopColor="#8c8c8c" /></linearGradient>
      <linearGradient id="arch" gradientUnits="userSpaceOnUse" x1="320" y1="440" x2="800" y2="380"><stop offset="0" stopColor="#2e2e2e" /><stop offset=".18" stopColor="#555" /><stop offset=".45" stopColor="#959595" /><stop offset=".75" stopColor="#8a8a8a" /><stop offset="1" stopColor="#757575" /></linearGradient>
      <linearGradient id="fade" gradientUnits="userSpaceOnUse" x1="735" y1="350" x2="810" y2="500"><stop offset="0" stopColor="#000" /><stop offset="1" stopColor="#fff" /></linearGradient>
      <mask id="tubeFade" maskUnits="userSpaceOnUse" x="600" y="250" width="800" height="1200"><rect x="600" y="250" width="800" height="1200" fill="url(#fade)" /></mask>
      <linearGradient id="crown" gradientUnits="userSpaceOnUse" x1="0" y1="90" x2="0" y2="260"><stop offset="0" stopColor="#727272" /><stop offset=".5" stopColor="#858585" /><stop offset="1" stopColor="#a0a0a0" /></linearGradient>
      <linearGradient id="pegL" gradientUnits="userSpaceOnUse" x1="640" y1="1770" x2="780" y2="1700"><stop offset="0" stopColor="#4e4e4e" /><stop offset=".5" stopColor="#9c9c9c" /><stop offset=".7" stopColor="#cfcfcf" /><stop offset="1" stopColor="#6c6c6c" /></linearGradient>
      <linearGradient id="pegR" gradientUnits="userSpaceOnUse" x1="1275" y1="1430" x2="1410" y2="1362"><stop offset="0" stopColor="#4e4e4e" /><stop offset=".45" stopColor="#9c9c9c" /><stop offset=".65" stopColor="#c8c8c8" /><stop offset="1" stopColor="#626262" /></linearGradient>
      <linearGradient id="collarL" gradientUnits="userSpaceOnUse" x1="540" y1="1560" x2="750" y2="1455"><stop offset="0" stopColor="#6e6e6e" /><stop offset=".35" stopColor="#a0a0a0" /><stop offset=".48" stopColor="#dcdcdc" /><stop offset=".62" stopColor="#a2a2a2" /><stop offset="1" stopColor="#5e5e5e" /></linearGradient>
      <linearGradient id="collarR" gradientUnits="userSpaceOnUse" x1="1165" y1="1300" x2="1390" y2="1190"><stop offset="0" stopColor="#444" /><stop offset=".3" stopColor="#868686" /><stop offset=".55" stopColor="#b0b0b0" /><stop offset=".75" stopColor="#969696" /><stop offset="1" stopColor="#606060" /></linearGradient>
    </defs>

    {pins.map((p, i) => <Pin key={i} p={p} />)}

    {/* textured crown and arms */}
    <path fill="url(#crown)" d="M107 500C105 440 108 370 125 340C145 290 175 240 225 200C270 160 330 120 430 97C490 84 570 82 645 100C720 115 800 165 860 215C920 275 950 320 975 375L880 430C830 350 780 300 700 262C620 215 500 205 400 272C340 330 310 390 316 500L330 560L112 560Z" />
    <path fill="url(#leftArm)" d="M107 480C105 400 130 330 190 240L360 305C325 360 312 420 322 490C328 530 350 570 360 590L740 1385L525 1490L282 945L130 610C115 570 108 530 107 480Z" />
    <path fill="url(#rightArm)" d="M830 400L930 310L975 375L1010 440L1140 690L1375 1150L1230 1200L1110 960Z" />

    {/* smooth inner tube */}
    <path fill="url(#arch)" d="M316 500C312 430 320 395 335 362C350 325 375 290 405 268C440 240 480 225 520 222C590 216 650 232 700 262C740 288 780 318 805 352C825 378 840 410 850 432L904 540L802 545C790 520 765 470 745 430C730 408 715 392 700 375C670 348 640 330 600 318C560 306 500 304 455 318C410 332 370 355 350 385C330 415 326 450 328 500Z" />
    <path fill="url(#tube)" mask="url(#tubeFade)" d="M700 375C720 395 740 420 755 450L1005 960L1195 1340L1270 1300L1230 1200L1112 960L850 432C832 395 815 365 790 335Z" />
    <path fill="none" stroke="#262626" strokeWidth="4" d="M318 470C318 400 345 310 405 268C500 205 640 215 720 272" />
    <path fill="none" stroke="#262626" strokeWidth="7" d="M718 271C780 315 820 370 845 425L1112 960L1230 1198" />
    <path fill="none" stroke="#383838" strokeWidth="11" d="M320 470C322 520 335 555 348 580L530 962L738 1385" />

    {edgeCups.map(([x, y], i) => <ellipse key={i} cx={x} cy={y} rx="11" ry="34" transform={`rotate(-24 ${x} ${y})`} fill="url(#cupDark)" stroke="#2a2a2a" strokeWidth="2.5" />)}
    {outerCups.map(([x, y, a], i) => (
      <g key={i} transform={`translate(${x} ${y}) rotate(${a})`}>
        <ellipse rx={i < 4 ? 29 : 16} ry="35" fill={i > 0 && i < 6 ? 'url(#cupLight)' : 'url(#cupDark)'} stroke="#222" strokeWidth="2.5" />
        {i < 4 && <ellipse cx="8" cy="4" rx="12" ry="13" fill="#4c4c4c" stroke="#222" strokeWidth="1.5" />}
      </g>
    ))}
    {leftMain.map(([x, y], i) => (
      <g key={i}>
        <ellipse cx={x} cy={y} rx="32" ry="38" transform={`rotate(-12 ${x} ${y})`} fill="url(#cupDark)" stroke="#222" strokeWidth="2.5" />
        <circle cx={x + 6} cy={y + 2} r="13" fill="#303030" /><path d={`M${x + 7} ${y - 6}q12 5 9 16q-8 2-13-3Z`} fill="#a6a6a6" />
      </g>
    ))}
    {leftInner.map(([x, y], i) => (
      <g key={i}>
        <ellipse cx={x} cy={y} rx="27" ry="36" transform={`rotate(${i < 2 ? 20 : -30} ${x} ${y})`} fill="url(#cupLight)" stroke="#222" strokeWidth="2.5" />
        <circle cx={x - 8} cy={y + 9} r="12" fill="#505050" stroke="#222" strokeWidth="1.5" />
      </g>
    ))}
    {innerCups.map(([x, y], i) => (
      <g key={i}>
        <ellipse cx={x} cy={y} rx="35" ry="32" transform={`rotate(${i < 6 ? 20 : 50} ${x} ${y})`} fill="url(#cupDark)" stroke="#222" strokeWidth="2.5" />
        <circle cx={x - 6} cy={y + 6} r="13" fill="#333" /><path d={`M${x - 14} ${y + 5}q8 0 14 8q-6 6-12 2Z`} fill="#9c9c9c" />
      </g>
    ))}
    {greyBalls.map(([x, y], i) => <circle key={i} cx={x} cy={y} r="20" fill="url(#grey)" />)}
    {brightBalls.map(([x, y], i) => <circle key={i} cx={x} cy={y} r="19" fill="url(#bright)" stroke="#3c3c3c" strokeWidth="1.5" />)}

    {/* left collar and peg */}
    <path fill="#393939" stroke="#1c1c1c" strokeWidth="2" d="M563 1578C580 1588 610 1582 650 1562L765 1500C785 1485 790 1475 786 1467L740 1400L540 1500Z" />
    <path fill="url(#collarL)" stroke="#333" strokeWidth="2" d="M525 1490C560 1450 680 1385 740 1385L786 1467C760 1458 610 1508 563 1578Z" />
    <path fill="url(#pegL)" d="M598 1552C630 1520 700 1485 758 1482L848 1675C830 1668 710 1710 693 1753Z" />
    <path fill="#444" stroke="#1c1c1c" strokeWidth="2" d="M693 1753C705 1715 830 1655 848 1675C858 1690 740 1770 693 1753Z" />

    {/* right collar and peg */}
    <path fill="#393939" stroke="#1c1c1c" strokeWidth="2" d="M1195 1343C1205 1352 1230 1348 1250 1338L1395 1268C1412 1255 1418 1245 1415 1232L1370 1160L1190 1280Z" />
    <path fill="url(#collarR)" d="M1120 1190L1180 1130L1230 1200C1270 1180 1330 1152 1370 1150L1415 1232C1380 1215 1220 1280 1195 1340Z" />
    <path fill="none" stroke="#222" strokeWidth="3" d="M1230 1200C1270 1180 1330 1152 1370 1150L1415 1232C1380 1215 1220 1280 1195 1340" />
    <path fill="url(#pegR)" d="M1237 1318C1270 1285 1340 1250 1390 1248L1478 1445C1460 1435 1340 1480 1323 1521Z" />
    <path fill="#444" stroke="#1c1c1c" strokeWidth="2" d="M1323 1521C1335 1480 1460 1425 1478 1443C1488 1460 1370 1535 1323 1521Z" />

    {/* work coordinate system */}
    <g fill="none" strokeWidth="5">
      <path d="M534 477L346 100" stroke="#ffff3c" /><path d="M345 110l14 22 12-24M359 132v12" stroke="#ffff3c" />
      <path d="M534 477L660 320" stroke="#d0122c" /><path d="M668 334l14 0-10 16h12" stroke="#d0122c" />
      <path d="M534 477L905 345" stroke="#1be02f" />
      <rect x="538" y="508" width="106" height="60" stroke="#f0ec6c" strokeWidth="3.5" />
    </g>
    <path d="M908 356l18 20M926 356l-18 20" stroke="#3fd350" strokeWidth="7" />
    <text x="543" y="551" fontSize="39" fontFamily="Liberation Sans" fill="#f0ec6c">WCS</text>
    <circle cx="713" cy="846" r="10" fill="#2fc83a" stroke="#143c14" strokeWidth="3" />
  </PartDrawing>
);

/* ---------- dialog content ---------- */

const TickMark = () => (
  <svg width="17" height="17" viewBox="0 0 17 17"><path d="M.5 7L4 6l2.500 4C9 6 12 2.500 16.500.5 12.500 5 9.500 10 7.500 16.500H6C5 13 3 10 .5 7Z" fill="#1f9048" stroke="#0f6a2e" strokeWidth=".9" /></svg>
);
const DotMark = () => <svg width="17" height="17" viewBox="0 0 17 17"><circle cx="9" cy="9" r="2" fill="#3a3c9c" /></svg>;

type Check = { text: string; level: number; box?: boolean; on?: boolean; count?: string };
const checks: Check[] = [
  { text: 'inverted normals detected', level: 1, box: true, on: true, count: '0' },
  { text: 'bad edges detected', level: 1, box: true, on: true, count: '0' },
  { text: 'bad contours detected', level: 2, count: '0' },
  { text: 'near bad edges detected', level: 2, box: true, on: true, count: '0' },
  { text: 'planar holes detected', level: 2, box: true, on: true, count: '0' },
  { text: 'shells detected', level: 1, box: true, on: true, count: '1' },
  { text: 'possible noise shells detected', level: 2, count: '0' },
  { text: 'overlapping triangles detected', level: 1, box: true },
  { text: 'intersecting triangles detected', level: 1, box: true },
];

const redTop: Tone = { ...violet, top: '#c81e28' };
const pages: (null | [string, React.ReactNode])[] = [
  ['Diagnostics', <Glass />],
  ['Combined Fix', <g stroke="#7f9cc4" fill="#dbe9f8"><path d="M4 4l8-2 4 2v12l-9 1-3-2Z" /><path d="M7 6l8-2 4 2v12l-9 1-3-2Z" /><path d="M10 8l8-2 4 2v12l-9 1-3-2Z" fill="#c4daf2" /></g>],
  null,
  ['Normals', <Cube x={1} y={1} w={21} h={23} right="#c01822" />],
  ['Stitching', <><Cube x={4} y={2} w={18} h={21} /><path d="M11 9l10-4-1 4-6 3Z" fill="#f0cf3c" stroke="#8f7b12" strokeWidth=".6" /></>],
  ['Noise Shells', <><Cube x={1} y={1} w={21} h={23} /><g fill="#20243c"><circle cx="5" cy="9" r="1.800" /><circle cx="9" cy="15" r="1.800" /><circle cx="5" cy="17" r="1.800" /><circle cx="11" cy="4" r="1.800" /><circle cx="15" cy="12" r="1.800" /><circle cx="20" cy="9" r="1.800" /><circle cx="18" cy="18" r="1.800" /></g></>],
  ['Holes', <Cube x={1} y={1} w={21} h={23} t={redTop} />],
  ['Triangles', <><Cube x={2} y={1} w={19} h={23} t={{ ...violet, right: '#b4baea', line: '#2a2f74' }} /><path d="M2 5l9.500 19L21 5M11.500 1L6 14M11.500 1L17 14" stroke="#2a2f74" /></>],
  ['Overlaps', <><Cube x={2} y={1} w={16} h={19} /><Cube x={9} y={5} w={13} h={18} right="#6f8fdc" /></>],
  ['Shells', <Cube x={1} y={1} w={21} h={23} />],
  null,
  ['Profiles', <><path d="M6 2h10l4 4v16H6Z" fill="#d8f4f8" stroke="#2a94a4" strokeWidth="1.500" /><path d="M9 10h8M9 13.500h8M9 17h8" stroke="#2a6f94" strokeWidth="1.400" /></>],
];

const FixWizard = () => (
  <Dialog role="dialog" aria-labelledby="wizard-title">
    <DialogTitle>
      <DialogHeading id="wizard-title">
        <svg width="14" height="14" viewBox="0 0 14 14"><path d="M4.500.5h5v4h4v5h-4v4h-5v-4h-4v-5h4Z" fill="#d91414" stroke="#8d0d0d" /></svg>
        Fix Wizard (Part: U detal) &gt; Diagnostics
      </DialogHeading>
      <DialogControls>
        <DialogControl $w={28} aria-label="Minimize"><svg width="13" height="12"><rect x=".5" y="6.500" width="12" height="4" fill="#fff" stroke="#4b5a80" /></svg></DialogControl>
        <DialogControl $w={27} aria-label="Maximize" disabled><svg width="13" height="10"><path d="M1 1h11v8H1ZM4 4h5v2H4Z" fill="none" stroke="#dfe8fa" strokeWidth="1.500" /></svg></DialogControl>
        <DialogControl $w={46} $danger aria-label="Close window"><svg width="13" height="11" viewBox="0 0 13 11"><path d="M2 1l9 9M11 1l-9 9" stroke="#5a1b14" strokeWidth="4" /><path d="M2 1l9 9M11 1l-9 9" stroke="#fff" strokeWidth="2.600" /></svg></DialogControl>
      </DialogControls>
    </DialogTitle>
    <DialogBody>
      <PageList aria-label="Wizard pages">
        {pages.map((page, i) => page ? (
          <PageRow key={page[0]}>
            <svg width="20" height="20" viewBox="0 0 24 24" fill="none">{page[1]}</svg>
            <PageName $selected={i === 0}>{page[0]}</PageName>
          </PageRow>
        ) : <PageRule key={i} />)}
      </PageList>
      <PageColumn>
        <PartRow>
          <PartLabel htmlFor="part">Current Part:</PartLabel>
          <PartPicker>
            <PartSelect id="part" defaultValue="U detal"><option>U detal</option></PartSelect>
            <PickerArrow width="8" height="5" viewBox="0 0 8 5"><path d="M0 0h8L4 5Z" /></PickerArrow>
          </PartPicker>
          <PushButton $w={44} disabled>Next</PushButton>
        </PartRow>
        <TabPage>
          <Group>
            <Legend>Advice</Legend>
            <AdviceBox>
              <AdviceText>No more errors are detected. It seems that the part is ok. Note that not all parameters were analysed.</AdviceText>
              <ScrollGutter>
                <svg width="7" height="4"><path d="M0 4h7L3.500 0Z" fill="#888" /></svg>
                <svg width="7" height="4"><path d="M0 0h7L3.500 4Z" fill="#888" /></svg>
              </ScrollGutter>
            </AdviceBox>
          </Group>
          <Group>
            <Legend>Diagnostics</Legend>
            <FullRow><Box type="checkbox" />Full Analysis</FullRow>
            <CheckList>
              {checks.map((c, i) => (
                <CheckRow key={c.text} $level={c.level}>
                  <BoxSlot>{c.box && <Box type="checkbox" id={`check-${i}`} defaultChecked={c.on} />}</BoxSlot>
                  <MarkSlot>{c.count ? <TickMark /> : <DotMark />}</MarkSlot>
                  <Count>{c.count}</Count>
                  {c.box ? <label htmlFor={`check-${i}`}>{c.text}</label> : <span>{c.text}</span>}
                </CheckRow>
              ))}
            </CheckList>
            <UpdateLine>
              <PushButton $w={114} $focus><Icon name="zoom" size={20} /><ButtonText>Update</ButtonText></PushButton>
            </UpdateLine>
          </Group>
        </TabPage>
        <DialogFooter>
          <PushButton $w={150}>
            <svg width="21" height="18" viewBox="0 0 21 18"><path d="M1 5.500h10V1l9 8-9 8v-4.500H1Z" fill="#62d431" stroke="#1f7a17" strokeWidth="1.500" strokeLinejoin="round" /></svg>
            <ButtonText>Follow Advice</ButtonText>
          </PushButton>
          <PushButton $w={58}>Close</PushButton>
          <PushButton $w={58}>Help</PushButton>
        </DialogFooter>
      </PageColumn>
      <Grip width="12" height="12"><path d="M1 12L12 1M5 12l7-7M9 12l3-3" stroke="#8c8c8c" strokeWidth="1.500" /></Grip>
    </DialogBody>
  </Dialog>
);

/* ---------- taskbar icons ---------- */

const StartOrb = () => (
  <svg width="38" height="38" viewBox="0 0 38 38">
    <defs><radialGradient id="orb" cx=".5" cy=".85" r=".9"><stop offset="0" stopColor="#4fc8ee" /><stop offset=".45" stopColor="#1c5f94" /><stop offset="1" stopColor="#8fb4d0" /></radialGradient></defs>
    <circle cx="19" cy="19" r="17.500" fill="url(#orb)" stroke="#163f63" strokeWidth="1.500" />
    <path d="M4 15C7 3 31 3 34 15c-8 4-22 4-30 0Z" fill="#fff" opacity=".3" />
    <path d="M11 12c3-2 5-1.500 7.500-.5l-2 7.500c-2.500-1-4.500-1-7.500.5Z" fill="#ee6a32" />
    <path d="M20 12c3 1.500 5 1.500 8.500 0l-2 7.500c-3 1.500-5.500 1.500-8.500 0Z" fill="#8fce3c" />
    <path d="M8.500 21c3-1.500 5-1.500 7.500-.5l-2 7.500c-2.500-1-4.500-1-7.500.5Z" fill="#4fa8e8" />
    <path d="M17.500 21c3 1.500 5 1.500 8.500 0l-2 7.500c-3 1.500-5.500 1.500-8.500 0Z" fill="#fbd03a" />
  </svg>
);

const Chrome = () => (
  <svg width="30" height="30" viewBox="0 0 30 30">
    <circle cx="15" cy="15" r="14.500" fill="#fbc52c" />
    <path d="M15 15L2.400 7.800A14.500 14.500 0 0 0 14.500 29.500L21 18.500Z" fill="#2f9e4c" />
    <path d="M9 18.500L2.400 7.800A14.500 14.500 0 0 1 27.600 8H15Z" fill="#dd3e30" />
    <circle cx="15" cy="15" r="7" fill="#fff" /><circle cx="15" cy="15" r="5.500" fill="#3f78e0" />
  </svg>
);

const ExplorerIcon = () => (
  <svg width="34" height="32" viewBox="0 0 34 32">
    <path d="M2 4h8l2 2h18v22H2Z" fill="#f2dc8c" stroke="#c1a44c" /><path d="M4 2h5v4H4Z" fill="#3d9a4b" /><path d="M14 4h5v4h-5Z" fill="#b33" /><path d="M22 5h6v4h-6Z" fill="#3c77c6" />
    <path d="M2 10h30v19H2Z" fill="#fbeaa8" stroke="#d3b65c" />
    <path d="M7 31V21q0-2 2-2h16q2 0 2 2v10h-5v-7H12v7Z" fill="#a7dcf4" stroke="#4fa5cc" />
  </svg>
);

const PaintIcon = () => (
  <svg width="34" height="32" viewBox="0 0 34 32">
    <path d="M3 20C3 12 12 7 20 9s10 8 8 14-8 7-13 6c-3-1-1-4-4-4.500S3 24 3 20Z" fill="#e8eef6" stroke="#8795aa" />
    <circle cx="9" cy="17" r="2.600" fill="#e0504a" /><circle cx="14.500" cy="13" r="2.600" fill="#f0b53c" /><circle cx="21" cy="13" r="2.400" fill="#5cb84a" /><circle cx="8" cy="22" r="2.300" fill="#4f8fe0" /><circle cx="16" cy="21" r="3" fill="#4aa0d0" />
    <path d="M21 30L28 10" stroke="#cf8238" strokeWidth="2.800" strokeLinecap="round" /><path d="M26 9l1-7 6 3-3 6Z" fill="#b79160" />
  </svg>
);

const V8Icon = () => (
  <svg width="34" height="34" viewBox="0 0 34 34">
    <circle cx="17" cy="17" r="15.500" fill="#27afcf" />
    <text x="3" y="24" fontSize="17" fontFamily="Lato, sans-serif" fill="#fff">v.</text>
    <g fill="none" stroke="#fff" strokeWidth="2"><circle cx="22.500" cy="6" r="4" /><circle cx="22.500" cy="17.500" r="7" /></g>
  </svg>
);

const MagicsIcon = () => (
  <svg width="32" height="34" viewBox="0 0 32 34">
    <path d="M9 2l3-1 13 14 1 4-4 13-3 1L4 22l-1-4Z" fill="#7d0e0e" /><path d="M10 1l16 14-6 17L4 20Z" fill="#e32a1c" />
    <path d="M11 19l13-6-5 9Z" fill="#f6e3e3" /><path d="M12 21l5 1-2 4Z" fill="#f6e3e3" />
  </svg>
);

export default function App() {
  return (
    <Shell>
      <Global />
      <TitleBar>
        <Glimpses aria-hidden="true">
          <defs><filter id="soft" x="-20%" y="-60%" width="140%" height="220%"><feGaussianBlur stdDeviation="2.500" /></filter></defs>
          <g filter="url(#soft)">
            {[172, 628, 704, 1084, 1388, 1464, 1615].map(x => <path key={x} d={`M${x} 8h20l6 6v12h-26Z`} fill="#e6f2dc" />)}
            <rect x="853" y="8" width="43" height="18" fill="#d0202c" /><rect x="930" y="8" width="42" height="18" fill="#d0202c" />
            <rect x="867" y="14" width="16" height="10" fill="#f3b9bb" /><circle cx="951" cy="20" r="4" fill="#f3b9bb" />
            <rect x="1764" y="8" width="46" height="4" fill="#5b8fd4" /><rect x="1768" y="11" width="38" height="14" fill="#1d1768" />
            <ellipse cx="1862" cy="22" rx="20" ry="11" fill="#6fe0fa" />
          </g>
        </Glimpses>
        <TitleLabel>
          <svg width="15" height="20" viewBox="0 0 15 20"><path d="M0 3h13l2 3v12H0Z" fill="#d81a1a" /><path d="M4 14l7-6-3 8Z" fill="#fff" /></svg>
          U detal - Magics 19.01
        </TitleLabel>
        <WindowButtons>
          <WindowButton $w={28} aria-label="Minimize"><svg width="12" height="12"><rect x="1" y="7" width="10" height="4" fill="#fff" stroke="#41546c" strokeWidth=".6" /></svg></WindowButton>
          <WindowButton $w={28} aria-label="Restore"><svg width="12" height="12"><path d="M3.500 3V1h7v8H9M1.500 3.500h6.500v7H1.500ZM4 6h2v2H4Z" fill="none" stroke="#fff" strokeWidth="1.500" /></svg></WindowButton>
          <WindowButton $w={46} aria-label="Close"><svg width="12" height="10" viewBox="0 0 12 10"><path d="M2 1l7 8M9 1L2 9" stroke="#fff" strokeWidth="2.400" /></svg></WindowButton>
        </WindowButtons>
      </TitleBar>

      <MenuBar>{menus.map(m => <MenuItem key={m}>{m}</MenuItem>)}</MenuBar>

      <ToolRow>
        <ToolGroup $first><Tools items={[['new', 'New'], ['open', 'Open'], ['save', 'Save'], ['saveAs', 'Save as']]} /></ToolGroup>
        <ToolGroup><Tools items={[['addPart', 'Import part'], ['savePart', 'Save part'], ['saveProject', 'Save project'], ['removePart', 'Unload part']]} /></ToolGroup>
        <ToolGroup><Tools items={[['print', 'Print']]} /></ToolGroup>
        <ToolGroup>
          <ToolButton $w={27} aria-label="Undo"><Icon name="undo" /></ToolButton>
          <ToolButton $w={14} aria-label="Undo list"><DropArrow /></ToolButton>
          <ToolButton $w={27} aria-label="Redo"><Icon name="redo" /></ToolButton>
          <ToolButton $w={14} aria-label="Redo list"><DropArrow /></ToolButton>
        </ToolGroup>
        <ToolGroup><ToolButton $pressed aria-label="Select parts"><Icon name="pick" /></ToolButton></ToolGroup>
        <ToolGroup><Tools items={[['rotate', 'Rotate view'], ['move', 'Pan view'], ['zoom', 'Zoom'], ['zoomOff', 'Unzoom']]} /></ToolGroup>
        <ToolGroup><Tools items={[['checklist', 'Fix wizard']]} /></ToolGroup>
        <ToolGroup $tight><Tools items={[['help', 'Help'], ['support', 'Support']]} /></ToolGroup>
        <TabStrip>{tabs.map((t, i) => <ToolTab key={t} $active={i === 0}>{t}</ToolTab>)}</TabStrip>
      </ToolRow>
      <ToolRow>
        {editGroups.map((g, i) => <ToolGroup key={i} $first={i === 0}><Tools items={g} /></ToolGroup>)}
      </ToolRow>

      <Workspace>
        <Stage>
          <Scene>
            <UPart />
            <AxisGizmo viewBox="0 0 150 100" fill="none" role="img" aria-label="Axes">
              <path d="M55 90L17 14M12 8l5 5 5-5M17 13v6" stroke="#ecec70" /><path d="M55 90L80 58" stroke="#d0204a" /><path d="M55 90L130 62" stroke="#22c860" />
              <path d="M84 57h6l-6 10h6" stroke="#d0204a" /><path d="M136 62l8 9M144 62l-8 9" stroke="#40cc70" />
            </AxisGizmo>
            <FixWizard />
          </Scene>
          <Ruler>
            {[0, 1, 2, 3, 4, 5].map(n => (
              <div key={n}>
                <Ticks>{Array.from({ length: n === 5 ? 8 : 10 }, (_, i) => <Tick key={i} $h={i === 0 ? 13 : i === 5 ? 8 : 4} />)}</Ticks>
                <RulerNumber $first={n === 0}>{n}</RulerNumber>
              </div>
            ))}
            <RulerUnit>cm</RulerUnit>
          </Ruler>
        </Stage>
        <SidePanel>
          <PinTab aria-label="Pin panel">
            <svg width="12" height="38" viewBox="0 0 12 38" fill="none"><path d="M0 10h5M5 5v10M5 7h6v6H5M1 16l10 5M1 33l10 4" stroke="#000" /><path d="M9 22v8l-5-4Z" fill="#000" /></svg>
          </PinTab>
        </SidePanel>
      </Workspace>

      <StatusBar>Ready</StatusBar>

      <Taskbar>
        <TaskGlow aria-hidden="true">
          <g fill="none" stroke="#d7efff" filter="url(#soft)"><path d="M1303 0L1385 44" strokeWidth="7" opacity=".9" /><path d="M370 10Q700 -6 1000 6" strokeWidth="3" opacity=".3" /><path d="M700 40L830 0" strokeWidth="5" opacity=".2" /><path d="M620 0l22 40" strokeWidth="3" opacity=".25" /></g>
        </TaskGlow>
        <Pinned $w={54} aria-label="Start"><StartOrb /></Pinned>
        <Pinned $w={67} aria-label="Chrome"><Chrome /></Pinned>
        <Running $stacked aria-label="Explorer"><ExplorerIcon /></Running>
        <Running aria-label="Paint"><PaintIcon /></Running>
        <Running aria-label="v8"><V8Icon /></Running>
        <Running $active aria-label="Magics"><MagicsIcon /></Running>
        <Tray>
          <TrayButton aria-label="Show hidden icons"><svg width="8" height="5"><path d="M0 5h8L4 0Z" fill="#fff" /></svg></TrayButton>
          <TrayButton aria-label="Safely remove hardware"><svg width="16" height="17" viewBox="0 0 16 17"><path d="M2 1h5v5H2Z" fill="#eee" /><path d="M1 5h7v8H1Z" fill="#8d8d8d" /><circle cx="11" cy="11.500" r="5" fill="#2fae36" stroke="#dff5df" strokeWidth=".6" /><path d="M8.500 11.500l2 2.500 3-5" stroke="#fff" strokeWidth="1.500" fill="none" /></svg></TrayButton>
          <TrayButton aria-label="Keyboard language"><svg width="16" height="17"><rect width="16" height="17" fill="#c9d1e4" /><rect x="3" y="2" width="10" height="13" fill="#fff" /><path d="M3 8.500h10M3 11.500h10M3 14.500h10M9 3.500h4M9 6h4" stroke="#c62b3a" strokeWidth="1.300" /><rect x="3" y="2" width="6" height="6" fill="#232a7a" /></svg></TrayButton>
          <TrayButton aria-label="Network"><svg width="16" height="17" viewBox="0 0 16 17"><path d="M5 4.500h10v8H5Z" fill="#26384e" stroke="#fff" /><path d="M1 1v4h4V1M3 5v10h8" stroke="#fff" fill="none" strokeWidth="1.300" /><path d="M7 9l6 6M13 9l-6 6" stroke="#d0202c" strokeWidth="2.200" /></svg></TrayButton>
          <TrayButton aria-label="Volume"><svg width="16" height="15" viewBox="0 0 16 15"><path d="M1 5h3l4-4v13l-4-4H1Z" fill="#fff" /><path d="M10 5q2 2.500 0 5M12 3.500q3.500 4 0 8" stroke="#fff" fill="none" /></svg></TrayButton>
          <Clock>16:28<br />08.11.2024</Clock>
          <ShowDesktop aria-label="Show desktop" />
        </Tray>
      </Taskbar>
    </Shell>
  );
}
